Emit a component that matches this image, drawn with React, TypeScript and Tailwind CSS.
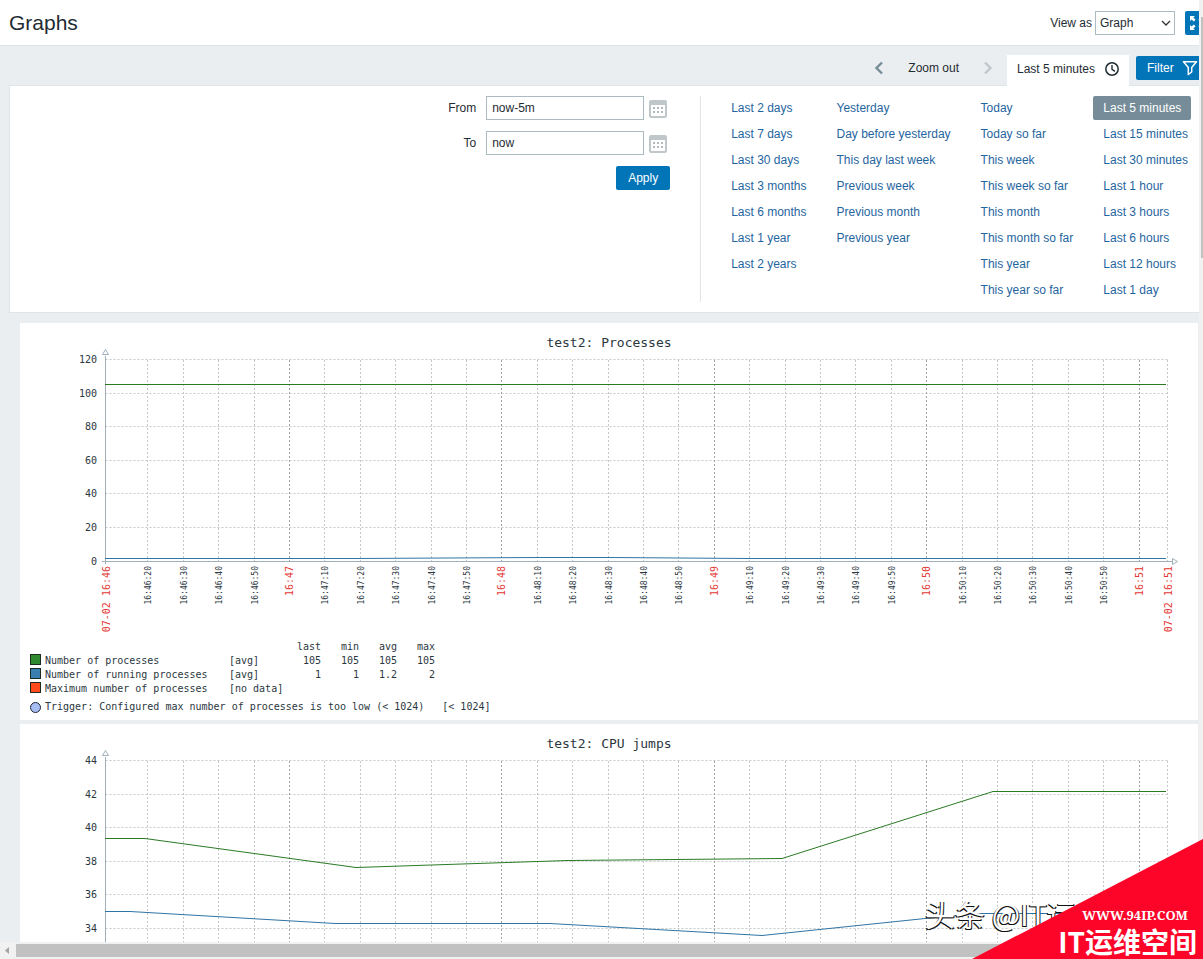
import React from "react";

const presets: string[][] = [
  ["Last 2 days", "Last 7 days", "Last 30 days", "Last 3 months", "Last 6 months", "Last 1 year", "Last 2 years"],
  ["Yesterday", "Day before yesterday", "This day last week", "Previous week", "Previous month", "Previous year"],
  ["Today", "Today so far", "This week", "This week so far", "This month", "This month so far", "This year", "This year so far"],
  ["Last 5 minutes", "Last 15 minutes", "Last 30 minutes", "Last 1 hour", "Last 3 hours", "Last 6 hours", "Last 12 hours", "Last 1 day"],
];

const MONO = '"DejaVu Sans Mono", "Liberation Mono", monospace';
const LEFT = 85.5;
const RIGHT = 1147.5;
const ROWS = [36.5, 70.5, 103.5, 137.5, 170.5, 204.5, 238.5];

// One tick every ten seconds, from 16:46:20 up to 16:51.
const ticks = Array.from({ length: 29 }, (_, i) => {
  const seconds = 20 + i * 10;
  const minute = 46 + Math.floor(seconds / 60);
  const rest = seconds % 60;
  return {
    x: Math.floor(269.5 + 35.4 * (i - 4)) + 0.5,
    major: rest === 0,
    label: rest === 0 ? `16:${minute}` : `16:${minute}:${rest}`,
  };
});

type Series = { color: string; points: string };

function Chart({ title, labels, series, timeAxis = false }: { title: string; labels: string[]; series: Series[]; timeAxis?: boolean }) {
  return (
    <svg viewBox="0 0 1178 317" className="block h-auto w-full" fontFamily={MONO} role="img" aria-label={title}>
      <text x="589" y="24" fontSize="13" textAnchor="middle" fill="#2b373e">{title}</text>
      {ROWS.slice(0, 6).map((y) => (
        <line key={y} x1={LEFT} x2={RIGHT} y1={y} y2={y} stroke="#c4c8ca" strokeDasharray="2 2" />
      ))}
      {ticks.map((t) => (
        <line key={t.x} x1={t.x} x2={t.x} y1="37" y2="238" stroke={t.major ? "#a0a3a5" : "#c4c8ca"} strokeDasharray="2 2" />
      ))}
      <line x1={RIGHT} x2={RIGHT} y1="37" y2="238" stroke="#c4c8ca" strokeDasharray="2 2" />
      <path d="M85.5 33V241M82 238.5H1152" stroke="#9fb0bb" fill="none" />
      <path d="M85.5 26.5L88.5 31.5H82.5ZM1152.5 235.5L1157.5 238.5L1152.5 241.5Z" stroke="#9fb0bb" fill="#fff" />
      {labels.map((l, i) => (
        <text key={l} x="77" y={ROWS[i] + 3.5} fontSize="10" textAnchor="end" fill="#2b373e">{l}</text>
      ))}
      {series.map((s) => (
        <polyline key={s.color} points={s.points} fill="none" stroke={s.color} />
      ))}
      {timeAxis && (
        <g>
          {ticks.map((t) => (
            <text key={t.x} transform={`translate(${t.x + (t.major ? 3.5 : 3)} 243) rotate(-90)`} fontSize={t.major ? 10 : 8} textAnchor="end" fill={t.major ? "#e33734" : "#2b373e"}>{t.label}</text>
          ))}
          <text transform="translate(90 243) rotate(-90)" fontSize="10" textAnchor="end" fill="#e33734">07-02 16:46</text>
          <text transform="translate(1152 243) rotate(-90)" fontSize="10" textAnchor="end" fill="#e33734">07-02 16:51</text>
        </g>
      )}
    </svg>
  );
}

const legend = [
  { color: "bg-[#2f8a2f]", name: "Number of processes", fn: "[avg]", values: ["105", "105", "105", "105"] },
  { color: "bg-[#3a7fb0]", name: "Number of running processes", fn: "[avg]", values: ["1", "1", "1.2", "2"] },
  { color: "bg-[#ff4a1c]", name: "Maximum number of processes", fn: "[no data]", values: ["", "", "", ""] },
];

function Legend() {
  return (
    <div className="px-2.5 pb-1.5 font-['DejaVu_Sans_Mono','Liberation_Mono',monospace] text-[10px] leading-[14px] whitespace-nowrap text-[#2b373e]">
      <table className="w-[405px] table-fixed border-collapse">
        <thead>
          <tr>
            <th className="w-[15px]"></th>
            <th className="w-[184px]"></th>
            <th className="w-[54px]"></th>
            {["last", "min", "avg", "max"].map((h) => (
              <th key={h} className="w-[38px] p-0 text-right font-normal">{h}</th>
            ))}
          </tr>
        </thead>
        <tbody>
          {legend.map((row) => (
            <tr key={row.name}>
              <td className="p-0 align-top"><span className={`block size-[11px] border border-[#1c2b22] ${row.color}`} /></td>
              <td className="p-0">{row.name}</td>
              <td className="p-0">{row.fn}</td>
              {row.values.map((v, i) => (
                <td key={i} className="p-0 text-right">{v}</td>
              ))}
            </tr>
          ))}
        </tbody>
      </table>
      <div className="mt-1 flex items-center gap-1">
        <span className="size-[11px] rounded-full border border-[#1c2433] bg-[#a9bdf5]" />
        <span>Trigger: Configured max number of processes is too low (&lt; 1024)</span>
        <span className="ml-3.5">[&lt; 1024]</span>
      </div>
    </div>
  );
}

function CalendarIcon() {
  return (
    <svg viewBox="0 0 18 18" className="size-[18px]" aria-hidden="true">
      <path fillRule="evenodd" fill="#c0c7ca" d="M2 0H16A2 2 0 0 1 18 2V16A2 2 0 0 1 16 18H2A2 2 0 0 1 0 16V2A2 2 0 0 1 2 0ZM2 5V16H16V5Z" />
      <path fill="#b3babd" d="M4 7h2v2H4zM8 7h2v2H8zM12 7h2v2h-2zM4 11h2v2H4zM8 11h2v2H8zM12 11h2v2h-2z" />
    </svg>
  );
}

function DateField({ id, label, value }: { id: string; label: string; value: string }) {
  return (
    <div className="flex items-center">
      <label htmlFor={id} className="mr-2.5">{label}</label>
      <input id={id} defaultValue={value} className="h-6 w-[158px] border border-[#acbbc2] bg-white px-[5px] text-[#1f2c33] outline-none" />
      <button type="button" aria-label={`Pick ${label} date`} className="ml-[5px] flex h-6 w-[21px] items-end pb-0.5"><CalendarIcon /></button>
    </div>
  );
}

export default function App() {
  return (
    <div className="relative flex h-screen flex-col overflow-hidden bg-[#ebeef0] font-['Liberation_Sans',Arial,sans-serif] text-xs text-[#1f2c33]">
      <div className="flex min-h-0 flex-1">
        <div className="min-w-0 flex-1 overflow-hidden">
          <header className="h-[46px] border-b border-[#dfe4e7] bg-white">
            <div className="flex h-[45px] w-[calc(100%+10px)] items-center pl-[9px]">
              <h1 className="flex-1 text-[21px]">Graphs</h1>
              <label htmlFor="view" className="mr-[3px]">View as</label>
              <div className="relative mr-2.5">
                <select id="view" defaultValue="Graph" className="block h-6 w-20 appearance-none border border-[#acbbc2] bg-white pl-1 text-[#1f2c33]">
                  <option>Graph</option>
                  <option>Values</option>
                </select>
                <svg viewBox="0 0 10 6" className="pointer-events-none absolute top-[9px] right-1 h-1.5 w-2.5" aria-hidden="true">
                  <path d="M1 1L5 5L9 1" fill="none" stroke="#333" strokeWidth="1.3" />
                </svg>
              </div>
              <button type="button" aria-label="Fullscreen" className="flex size-6 items-center justify-center rounded-xs bg-[#0275b8]">
                <svg viewBox="0 0 14 14" className="size-3.5" aria-hidden="true">
                  <path fill="#fff" d="M0 0H5L3.4 1.6L5.6 3.8L3.8 5.6L1.6 3.4L0 5ZM14 0V5L12.4 3.4L10.2 5.6L8.4 3.8L10.6 1.6L9 0ZM0 14V9L1.6 10.6L3.800 8.400L5.600 10.200L3.400 12.400L5 14ZM14 14H9L10.600 12.400L8.400 10.200L10.200 8.400L12.400 10.600L14 9Z" />
                </svg>
              </button>
            </div>
          </header>

          <div className="flex h-[39px] w-[calc(100%+10px)] items-end justify-end">
            <div className="flex h-[34px] items-center">
              <button type="button" aria-label="Previous period" className="mr-6">
                <svg viewBox="0 0 10 14" className="h-3.5 w-2.5" aria-hidden="true"><path d="M8 1.500L2.500 7L8 12.500" fill="none" stroke="#768d99" strokeWidth="2.4" /></svg>
              </button>
              <button type="button">Zoom out</button>
              <button type="button" aria-label="Next period" className="mr-3.5 ml-6">
                <svg viewBox="0 0 10 14" className="h-3.5 w-2.5" aria-hidden="true"><path d="M2 1.500L7.500 7L2 12.500" fill="none" stroke="#c0c8cc" strokeWidth="2.4" /></svg>
              </button>
            </div>
            <button type="button" className="relative -mb-px flex h-[31px] w-[122px] items-center justify-between bg-white px-2.5 pb-1 whitespace-nowrap">
              <span>Last 5 minutes</span>
              <svg viewBox="0 0 14 14" className="size-3.5 shrink-0" aria-hidden="true"><circle cx="7" cy="7" r="6.200" fill="none" stroke="#1f2c33" strokeWidth="1.500" /><path d="M7 3V7.300L10 9.300" fill="none" stroke="#1f2c33" strokeWidth="1.400" /></svg>
            </button>
            <button type="button" className="mb-[5px] ml-[7px] flex h-6 w-[73px] items-center gap-2 rounded-xs bg-[#0275b8] pl-[11px] text-white">
              <span>Filter</span>
              <svg viewBox="0 0 16 16" className="size-4 shrink-0" aria-hidden="true"><path d="M1.500 1.700H14.500L9.700 7.500V12L6.300 14.500V7.500Z" fill="none" stroke="#fff" strokeWidth="1.500" strokeLinejoin="round" /></svg>
            </button>
          </div>

          <section className="ml-[9px] flex border border-r-0 border-[#dfe4e7] bg-white py-2.5 pr-px">
            <form className="flex min-w-0 flex-1 flex-col items-end gap-[11px] border-r border-[#dfe4e7] pr-[30px]" onSubmit={(e) => e.preventDefault()}>
              <DateField id="from" label="From" value="now-5m" />
              <DateField id="to" label="To" value="now" />
              <button type="submit" className="h-6 w-[54px] rounded-xs bg-[#0275b8] text-white">Apply</button>
            </form>
            <div className="flex h-[206px] gap-[10px] pl-5">
              {presets.map((column, c) => (
                <ul key={c} className="flex flex-col items-start gap-0.5 whitespace-nowrap">
                  {column.map((item) => (
                    <li key={item}>
                      <a href="#" className={item === "Last 5 minutes" ? "block h-6 rounded-xs bg-[#768d99] px-2.5 leading-6 text-white" : "block h-6 px-2.5 leading-6 text-[#1f65a0]"}>{item}</a>
                    </li>
                  ))}
                </ul>
              ))}
            </div>
          </section>

          <main className="flex flex-col gap-1 pt-2.5 pr-px pl-5">
            <section className="bg-white">
              <Chart
                title="test2: Processes"
                timeAxis
                labels={["120", "100", "80", "60", "40", "20", "0"]}
                series={[
                  { color: "#2a7a24", points: "85,61.500 1146,61.500" },
                  { color: "#2f74a5", points: "85,235.500 335,235.500 520,234.500 590,234.500 730,235.500 1146,235.500" },
                ]}
              />
              <Legend />
            </section>
            <section className="bg-white">
              <Chart
                title="test2: CPU jumps"
                labels={["44", "42", "40", "38", "36", "34"]}
                series={[
                  { color: "#2a7a24", points: "85,114.500 125,114.500 336,143.500 548,136.500 762,134.500 973,67.500 1146,67.500" },
                  { color: "#2f74a5", points: "85,187.500 110,187.500 315,199.500 530,199.500 742,211.500 905,194.500 960,189.500 1146,189.500" },
                ]}
              />
            </section>
          </main>
        </div>
        <div className="w-1 bg-[#f1f1f1] pt-[17px] pl-0.5"><div className="h-[241px] bg-[#c1c1c1]" /></div>
      </div>

      <div className="flex h-[17px] bg-[#f1f1f1] py-0.5">
        <svg viewBox="0 0 16 13" className="h-[13px] w-4 shrink-0" aria-hidden="true"><path d="M9 3V10L5 6.500Z" fill="#a3a3a3" /></svg>
        <div className="flex-1 bg-[#c1c1c1]" />
      </div>

      <div className="absolute right-0 bottom-0 h-[120px] w-[278px] overflow-hidden font-['Noto_Sans_CJK_SC',sans-serif] whitespace-nowrap text-white">
        <span className="absolute top-[52px] left-0 text-[30px] leading-[44px] [text-shadow:-1px_1px_0_#111,1px_1px_0_#111]">头条 @IT运</span>
        <svg viewBox="0 0 231 120" className="absolute right-0 bottom-0 h-[120px] w-[231px]" aria-hidden="true"><path d="M231 0V120H0Z" fill="#fc0529" /></svg>
        <span className="absolute right-[15px] bottom-[34px] font-['Noto_Serif','DejaVu_Serif','Liberation_Serif',serif] text-[13px] leading-5 font-bold">WWW.94IP.COM</span>
        <span className="absolute right-1.5 bottom-0 text-[28px] leading-9 font-bold">IT运维空间</span>
      </div>
    </div>
  );
}
